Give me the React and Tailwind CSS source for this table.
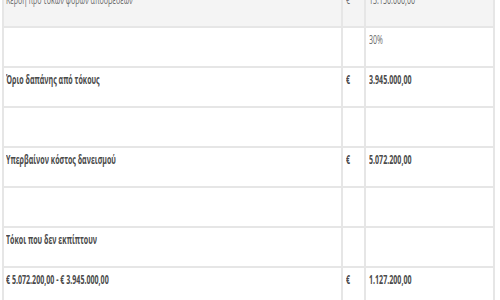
const rows = [
  { label: 'Κέρδη προ τόκων φόρων αποσβέσεων', cur: '€', value: '13.150.000,00', bold: false, shade: true },
  { label: '', cur: '', value: '30%', bold: false },
  { label: 'Όριο δαπάνης από τόκους', cur: '€', value: '3.945.000,00', bold: true },
  { label: '', cur: '', value: '', bold: false },
  { label: 'Υπερβαίνον κόστος δανεισμού', cur: '€', value: '5.072.200,00', bold: true },
  { label: '', cur: '', value: '', bold: false },
  { label: 'Τόκοι που δεν εκπίπτουν', cur: '', value: '', bold: true },
  { label: '€ 5.072.200,00 - € 3.945.000,00', cur: '€', value: '1.127.200,00', bold: true },
];

function Txt({ children, bold }) {
  return (
    <span
      className={`block origin-left scale-x-[0.59] whitespace-nowrap text-[12px] leading-[14px] ${
        bold ? 'font-bold text-[#4a4a4a]' : 'text-[#6b6b6b]'
      }`}
    >
      {children}
    </span>
  );
}

export default function App() {
  return (
    <div className="h-[300px] w-[500px] overflow-hidden bg-white font-['Open_Sans',sans-serif] text-[12px] leading-[14px]">
      <div className="-mt-[12px] ml-[2px] w-[493px] border-l-2 border-r-2 border-[#e6e6e6]">
        {rows.map((r, i) => (
          <div
            key={i}
            className={`grid h-[40px] grid-cols-[337px_23px_129px] border-b-2 border-[#e6e6e6] ${
              r.shade ? 'bg-[#f4f4f4]' : 'bg-white'
            }`}
          >
            <div className="pl-[2px] pt-[5px]">
              <Txt bold={r.bold}>{r.label}</Txt>
            </div>
            <div className="border-l-2 border-[#e6e6e6] pl-[3px] pt-[5px]">
              <Txt bold={r.bold}>{r.cur}</Txt>
            </div>
            <div className="border-l-2 border-[#e6e6e6] pl-[3px] pt-[5px]">
              <Txt bold={r.bold}>{r.value}</Txt>
            </div>
          </div>
        ))}
      </div>
    </div>
  );
}
